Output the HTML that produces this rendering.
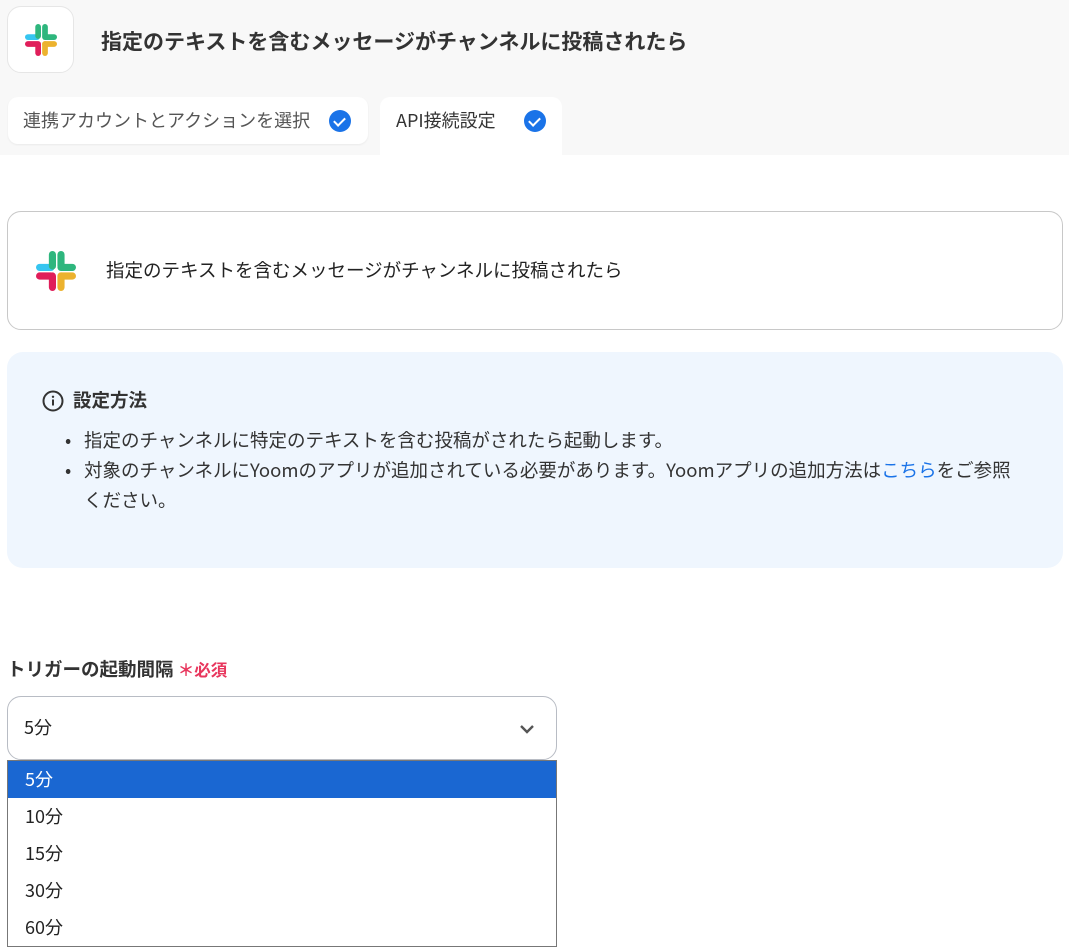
<!DOCTYPE html><html><head><meta charset="utf-8"><style>
*{box-sizing:border-box;margin:0;padding:0}
body{width:1069px;height:949px;background:#fff;font-family:"Noto Sans CJK JP","Liberation Sans",sans-serif;color:#333;position:relative;overflow:hidden}
.hdr{position:absolute;left:0;top:0;width:1069px;height:155px;background:#f8f8f8}
.abs{position:absolute;white-space:nowrap}
.chk{display:inline-block;width:22px;height:22px;border-radius:50%;background:#1a73e8;position:absolute}
.chk:after{content:"";position:absolute;left:7px;top:5px;width:5px;height:9px;border:solid #fff;border-width:0 2px 2px 0;transform:rotate(45deg)}
.opt{position:absolute;left:8px;width:548px;height:37px;font-size:18px;line-height:37px;padding:0 0 0 17px;color:#222}
</style></head><body>
<div class="hdr"></div>
<svg width="0" height="0" style="position:absolute"><defs><g id="sl">
<rect x="0" y="9" width="13" height="5" rx="2.5" fill="#36c5f0"/><rect x="9" y="0" width="5" height="13" rx="2.5" fill="#2eb67d"/>
<rect x="15" y="0" width="5" height="13" rx="2.5" fill="#2eb67d"/><rect x="15" y="9" width="13" height="5" rx="2.5" fill="#2eb67d"/>
<rect x="15" y="15" width="13" height="5" rx="2.5" fill="#ecb22e"/><rect x="15" y="15" width="5" height="13" rx="2.5" fill="#ecb22e"/>
<rect x="0" y="15" width="13" height="5" rx="2.5" fill="#e01e5a"/><rect x="9" y="15" width="5" height="13" rx="2.5" fill="#e01e5a"/>
</g></defs></svg>
<div class="abs" style="left:7px;top:6px;width:67px;height:67px;background:#fff;border:1px solid #e6e6e6;border-radius:14px"></div>
<svg class="abs" style="left:25px;top:24px" width="32" height="32" viewBox="0 0 28 28"><use href="#sl"/></svg>
<div class="abs" style="left:101px;top:26px;font-size:21px;line-height:30px;font-weight:bold;color:#333">指定のテキストを含むメッセージがチャンネルに投稿されたら</div>
<div class="abs" style="left:8px;top:97px;width:360px;height:47px;background:#fff;border-radius:10px;box-shadow:0 1px 2px rgba(0,0,0,.06)"></div>
<div class="abs" style="left:23px;top:106px;font-size:18px;line-height:28px;color:#555">連携アカウントとアクションを選択</div>
<span class="chk" style="left:329px;top:110px"></span>
<div class="abs" style="left:380px;top:97px;width:182px;height:58px;background:#fff;border-radius:10px 10px 0 0"></div>
<div class="abs" style="left:396px;top:106px;font-size:18px;line-height:28px;color:#333">API接続設定</div>
<span class="chk" style="left:524px;top:110px"></span>
<div class="abs" style="left:7px;top:211px;width:1056px;height:119px;border:1px solid #c8c8c8;border-radius:14px"></div>
<svg class="abs" style="left:36px;top:251px" width="40" height="40" viewBox="0 0 28 28"><use href="#sl"/></svg>
<div class="abs" style="left:106px;top:257px;font-size:18.5px;line-height:26px;color:#222">指定のテキストを含むメッセージがチャンネルに投稿されたら</div>
<div class="abs" style="left:7px;top:352px;width:1056px;height:216px;background:#eff6fe;border-radius:16px"></div>
<svg class="abs" style="left:42px;top:390px" width="22" height="22" viewBox="0 0 22 22"><circle cx="11" cy="11" r="9.5" fill="none" stroke="#333" stroke-width="2"/><rect x="10" y="9.5" width="2" height="6" fill="#333"/><circle cx="11" cy="6.8" r="1.2" fill="#333"/></svg>
<div class="abs" style="left:73px;top:386px;font-size:18.5px;line-height:28px;font-weight:bold;color:#333">設定方法</div>
<div style="position:absolute;left:62px;top:425px;font-size:18.5px;line-height:30px;color:#333;width:990px;white-space:nowrap">
<div style="position:relative;padding-left:22px"><span style="position:absolute;left:3px">•</span>指定のチャンネルに特定のテキストを含む投稿がされたら起動します。</div>
<div style="position:relative;padding-left:22px"><span style="position:absolute;left:3px">•</span>対象のチャンネルにYoomのアプリが追加されている必要があります。Yoomアプリの追加方法は<span style="color:#1a73e8">こちら</span>をご参照<br>ください。</div></div>
<div class="abs" style="left:7px;top:655px;font-size:18.5px;line-height:28px;font-weight:bold;color:#333">トリガーの起動間隔 <span style="color:#e8365d;font-size:16.5px">＊必須</span></div>
<div class="abs" style="left:7px;top:696px;width:550px;height:64px;border:1px solid #b8bcc4;border-radius:14px"></div>
<div class="abs" style="left:24px;top:714px;font-size:18px;line-height:26px;color:#222">5分</div>
<svg class="abs" style="left:518px;top:722px" width="18" height="14" viewBox="0 0 18 14"><path d="M3 4l6 6 6-6" fill="none" stroke="#555" stroke-width="2.4"/></svg>
<div class="abs" style="left:7px;top:760px;width:550px;height:187px;border:1px solid #777;background:#fff"></div>
<div class="opt" style="top:761px;background:#1a67d2;color:#fff">5分</div>
<div class="opt" style="top:798px">10分</div>
<div class="opt" style="top:835px">15分</div>
<div class="opt" style="top:872px">30分</div>
<div class="opt" style="top:909px">60分</div>
</body></html>
